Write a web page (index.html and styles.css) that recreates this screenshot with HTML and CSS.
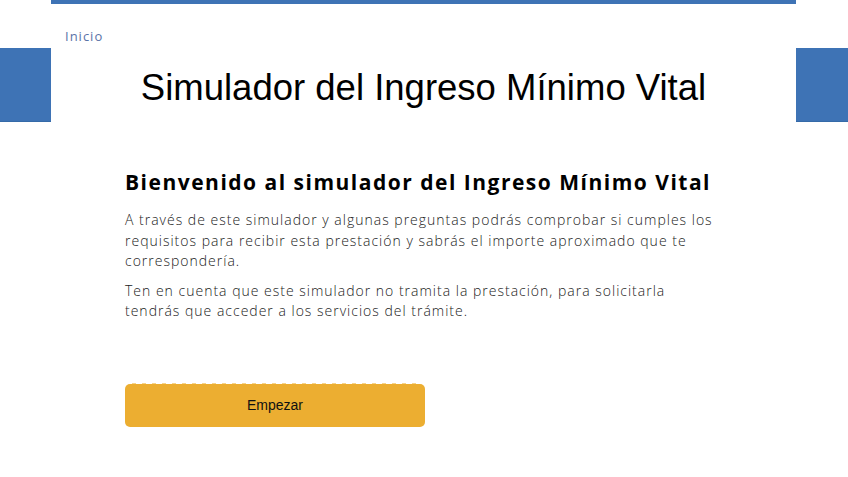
FILE: index.html
```html
<!DOCTYPE html>
<html lang="es">
<head>
<meta charset="utf-8">
<title>Simulador del Ingreso Mínimo Vital</title>
<link rel="stylesheet" href="styles.css">
</head>
<body>
<div class="page">
  <div class="side"><div class="side-block"></div></div>
  <main class="main">
    <nav class="crumb">Inicio</nav>
    <h1 class="title">Simulador del Ingreso Mínimo Vital</h1>
    <section class="content">
      <h2 class="heading">Bienvenido al simulador del Ingreso Mínimo Vital</h2>
      <p class="text">A través de este simulador y algunas preguntas podrás comprobar si cumples los requisitos para recibir esta prestación y sabrás el importe aproximado que te correspondería.</p>
      <p class="text">Ten en cuenta que este simulador no tramita la prestación, para solicitarla tendrás que acceder a los servicios del trámite.</p>
      <div class="btn-wrap"><button class="btn">Empezar</button></div>
    </section>
  </main>
  <div class="side"><div class="side-block"></div></div>
</div>
</body>
</html>
```
FILE: styles.css
```css
* { box-sizing: border-box; }
html, body { margin: 0; padding: 0; background: #fff; }
body { width: 848px; height: 477px; overflow: hidden; }
.page { display: flex; align-items: flex-start; }
.side { width: 51px; flex: none; padding-top: 48px; }
.side:last-child { width: 52px; }
.side-block { height: 74px; background: #3e73b5; border-bottom: 1px solid #356aa8; }
.main { width: 745px; flex: none; border-top: 4px solid #3e73b5; }
.crumb {
  font-family: "Open Sans", sans-serif; font-size: 13px; color: #5a73a8;
  letter-spacing: 1px; padding: 23px 0 0 14px; line-height: 18px;
}
.title {
  font-family: "Liberation Sans", Arial, sans-serif; font-weight: 400;
  font-size: 36.5px; text-align: center; margin: 23px 0 0; line-height: 40px; color: #000;
}
.content { padding: 60px 0 0 74px; }
.heading {
  font-family: "Open Sans", sans-serif; font-weight: 700; font-size: 21px;
  letter-spacing: 1.5px; margin: 0 0 14px; line-height: 28px; color: #000;
}
.text {
  font-family: "Open Sans", sans-serif; font-weight: 300; font-size: 14px; line-height: 20.5px;
  letter-spacing: 1px; color: #222; margin: 0 0 9px; width: 592px;
}
.btn-wrap { padding-top: 53px; position: relative; width: 300px; }
.btn-wrap::before {
  content: ""; position: absolute; left: 4px; right: 8px; top: 49px; height: 6px;
  background: radial-gradient(circle at 50% 100%, #f6d48a 0 3px, transparent 3.5px) 0 0 / 10px 6px repeat-x;
}
.btn {
  display: block; width: 300px; height: 43px; border: 0; border-radius: 5px;
  background: #ecae31; font-family: "Liberation Sans", Arial, sans-serif;
  font-size: 14px; color: #111; position: relative;
}
```
